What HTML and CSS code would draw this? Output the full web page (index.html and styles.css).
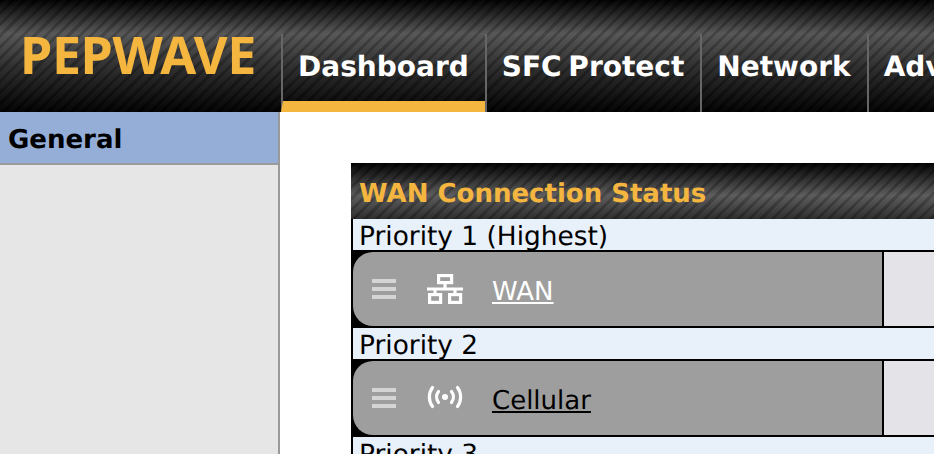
FILE: index.html
```html
<!DOCTYPE html>
<html>

<head>
  <title>Dashboard</title>
  <meta charset="utf-8">
  <link rel="stylesheet" href="styles.css">
</head>

<body>

  <div class="header">
    <div class="logo"><span class="logo__text">PEPWAVE</span></div>
    <ul class="tabs">
      <li class="tab tab--active">Dashboard</li>
      <li class="tab tab--spaced">SFC Protect</li>
      <li class="tab">Network</li>
      <li class="tab">Advanced</li>
    </ul>
  </div>

  <div class="page">
    <div class="sidebar">
      <div class="sidebar__item">General</div>
    </div>

    <div class="content">
      <div class="wan">
        <div class="wan__title">WAN Connection Status</div>

        <div class="wan__priority">Priority 1 (Highest)</div>
        <div class="wan__row">
          <div class="wan__name">
            <div class="handle"><span></span><span></span><span></span></div>
            <svg class="icon" width="36" height="30" viewBox="0 0 36 30" fill="none" stroke="#fff" stroke-width="3.200">
              <rect x="11.600" y="1.600" width="13" height="7" />
              <path d="M18 9v6M0 15h36M8 15v5M28 15v5" />
              <rect x="2.600" y="20.600" width="11" height="7.800" />
              <rect x="22.600" y="20.600" width="11" height="7.800" />
            </svg>
            <a class="wan__link wan__link--up">WAN</a>
          </div>
          <div class="wan__detail"></div>
        </div>

        <div class="wan__priority">Priority 2</div>
        <div class="wan__row">
          <div class="wan__name">
            <div class="handle"><span></span><span></span><span></span></div>
            <svg class="icon" width="36" height="30" viewBox="0 0 36 30" fill="none" stroke="#fff" stroke-width="3.200" stroke-linecap="round">
              <circle cx="18" cy="14" r="3" fill="#fff" stroke="none" />
              <path d="M11.500 8.500a9 9 0 0 0 0 11M24.500 8.500a9 9 0 0 1 0 11" />
              <path d="M5.500 4.500a16 16 0 0 0 0 19M30.500 4.500a16 16 0 0 1 0 19" />
            </svg>
            <a class="wan__link">Cellular</a>
          </div>
          <div class="wan__detail"></div>
        </div>

        <div class="wan__priority">Priority 3</div>
      </div>
    </div>
  </div>

</body>

</html>
```

FILE: styles.css
```css
:root {
  --stripes: repeating-linear-gradient(135deg, rgba(0, 0, 0, 0.18) 0, rgba(0, 0, 0, 0.18) 3px, rgba(255, 255, 255, 0.02) 3px, rgba(255, 255, 255, 0.02) 8px);
}

html,
body {
  margin: 0;
  height: 454px;
  overflow: hidden;
}

body {
  font-family: "DejaVu Sans", sans-serif;
  font-size: 26px;
  color: #000;
  background-color: #fff;
  text-rendering: geometricPrecision;
}

.header {
  display: flex;
  height: 112px;
  overflow: hidden;
  background-color: #000;
  background-image: var(--stripes), linear-gradient(#000 0, #555 30%, #2e2e2e 58%, #000 100%);
}

.logo {
  width: 281px;
  flex: none;
  padding: 25px 0 0 20px;
  box-sizing: border-box;
}

.logo__text {
  display: inline-block;
  font-family: "Noto Sans", sans-serif;
  font-weight: bold;
  font-size: 52px;
  line-height: 60px;
  letter-spacing: -0.400px;
  color: #f4b63f;
}

.tabs {
  display: flex;
  margin: 34px 0 0;
  padding: 0;
  list-style: none;
}

.tab {
  flex: none;
  height: 78px;
  box-sizing: border-box;
  padding: 12px 16px 0 15px;
  border-left: 2px solid #666;
  font-weight: bold;
  font-size: 28px;
  line-height: 42px;
  color: #fff;
}

.tab--spaced {
  word-spacing: -3px;
}

.tab--active {
  border-bottom: 11px solid #f4b63f;
}

.page {
  display: flex;
  height: 342px;
}

.sidebar {
  width: 278px;
  flex: none;
  border-right: 2px solid #9a9a9a;
  background-color: #e6e6e6;
}

.sidebar__item {
  height: 51px;
  padding-left: 8px;
  border-bottom: 2px solid #9a9a9a;
  font-weight: bold;
  line-height: 57px;
  background-color: #95aed8;
}

.content {
  flex: none;
  width: 800px;
  padding: 51px 0 0 71px;
}

.wan {
  display: flex;
  flex-direction: column;
  gap: 2px;
  border-left: 2px solid #000;
  background-color: #000;
}

.wan__title {
  height: 56px;
  margin-left: -2px;
  margin-bottom: -2px;
  padding-left: 8px;
  font-weight: bold;
  line-height: 62px;
  color: #f4b63f;
  background-image: var(--stripes), linear-gradient(#000 0, #5a5a5a 58%, #2a2a2a 100%);
}

.wan__priority {
  height: 31px;
  padding-left: 6px;
  font-size: 26.400px;
  line-height: 36px;
  background-color: #e8f0fa;
}

.wan__row {
  display: flex;
  gap: 2px;
  height: 74px;
}

.wan__name {
  display: flex;
  align-items: center;
  width: 529px;
  flex: none;
  box-sizing: border-box;
  padding-left: 19px;
  border-radius: 20px 0 0 20px;
  background-color: #9e9e9e;
}

.wan__detail {
  flex: 1;
  background-color: #e4e3e8;
}

.handle {
  display: flex;
  flex-direction: column;
  gap: 4px;
  width: 24px;
  margin-right: 31px;
}

.handle span {
  height: 4px;
  background-color: #d4d4d4;
}

.icon {
  flex: none;
  margin-right: 29px;
}

.wan__link {
  padding-top: 6px;
  text-decoration: underline;
  color: #000;
}

.wan__link--up {
  color: #fff;
}
```
